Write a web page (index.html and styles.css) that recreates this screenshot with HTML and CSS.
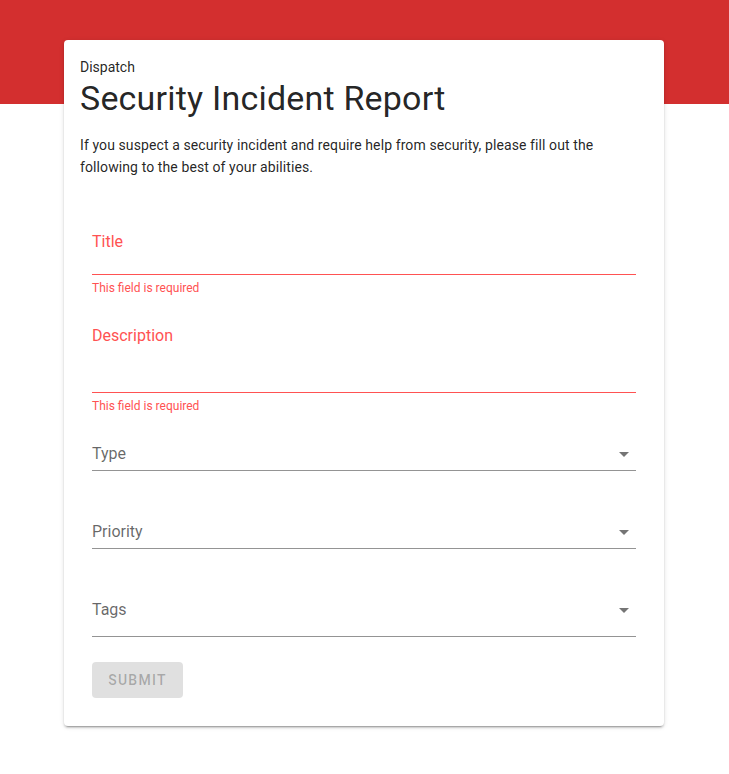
FILE: index.html
```html
<!DOCTYPE html>
<html>
<head>
<meta charset="utf-8">
<link rel="stylesheet" href="styles.css">
</head>
<body>
<div class="page">
  <div class="card">
    <div class="overline">Dispatch</div>
    <h1 class="title">Security Incident Report</h1>
    <p class="intro">If you suspect a security incident and require help from security, please fill out the following to the best of your abilities.</p>
    <form class="form">
      <div class="field field-title error">
        <div class="control"><span class="label">Title</span></div>
        <div class="msg">This field is required</div>
      </div>
      <div class="field field-desc error">
        <div class="control"><span class="label">Description</span></div>
        <div class="msg">This field is required</div>
      </div>
      <div class="field select field-type">
        <div class="control"><span class="label">Type</span>
          <svg class="arrow" viewBox="0 0 24 24" width="24" height="24"><path d="M7 10l5 5 5-5z"/></svg></div>
      </div>
      <div class="field select field-priority">
        <div class="control"><span class="label">Priority</span>
          <svg class="arrow" viewBox="0 0 24 24" width="24" height="24"><path d="M7 10l5 5 5-5z"/></svg></div>
      </div>
      <div class="field select field-tags">
        <div class="control"><span class="label">Tags</span>
          <svg class="arrow" viewBox="0 0 24 24" width="24" height="24"><path d="M7 10l5 5 5-5z"/></svg></div>
      </div>
      <button type="button" class="submit" disabled>Submit</button>
    </form>
  </div>
</div>
</body>
</html>
```

FILE: styles.css
```css
* { box-sizing: border-box; }
html, body { margin: 0; padding: 0; }
body {
  font-family: Roboto, "Noto Sans", sans-serif;
  color: rgba(0,0,0,.87);
  background: #fff;
}
.page {
  background: linear-gradient(#d32f2f 0, #d32f2f 104px, #fff 104px);
  padding: 40px 0 48px 64px;
  min-height: 774px;
}
.card {
  width: 600px;
  background: #fff;
  border-radius: 4px;
  box-shadow: 0 3px 1px -2px rgba(0,0,0,.2), 0 2px 2px 0 rgba(0,0,0,.14), 0 1px 5px 0 rgba(0,0,0,.12);
  padding: 16px 16px 28px;
}
.overline {
  font-size: 14px;
  line-height: 22px;
}
.title {
  margin: 0;
  font-size: 34px;
  font-weight: 400;
  line-height: 40px;
  letter-spacing: .2px;
}
.intro {
  margin: 16px 0 0;
  font-size: 14px;
  line-height: 22px;
  letter-spacing: .1px;
  padding-right: 12px;
}
.form {
  padding: 0 12px;
  margin-top: 52px;
}
.field { display: flex; flex-direction: column; }
.control {
  display: flex;
  align-items: flex-start;
  border-bottom: 1px solid rgba(0,0,0,.42);
}
.label {
  flex: 1;
  font-size: 16px;
  line-height: 24px;
  color: rgba(0,0,0,.6);
}
.arrow { fill: rgba(0,0,0,.54); flex: none; }
.error .control { border-bottom-color: #ff5252; }
.error .label { color: #ff5252; }
.msg {
  font-size: 12px;
  line-height: 14px;
  color: #ff5252;
  margin-top: 6px;
}
.field-title .control { height: 45px; }
.field-desc { margin-top: 29px; }
.field-desc .control { height: 69px; }
.field-type { margin-top: 29px; }
.field-type .control, .field-priority .control { height: 29px; }
.field-priority, .field-tags { margin-top: 49px; }
.field-tags .control { height: 39px; }
.submit {
  margin-top: 25px;
  height: 36px;
  width: 91px;
  padding: 0 16px;
  border: 0;
  border-radius: 4px;
  background: rgba(0,0,0,.12);
  color: rgba(0,0,0,.26);
  font-family: Roboto, sans-serif;
  font-size: 14px;
  font-weight: 500;
  letter-spacing: 1.25px;
  text-transform: uppercase;
}
```
